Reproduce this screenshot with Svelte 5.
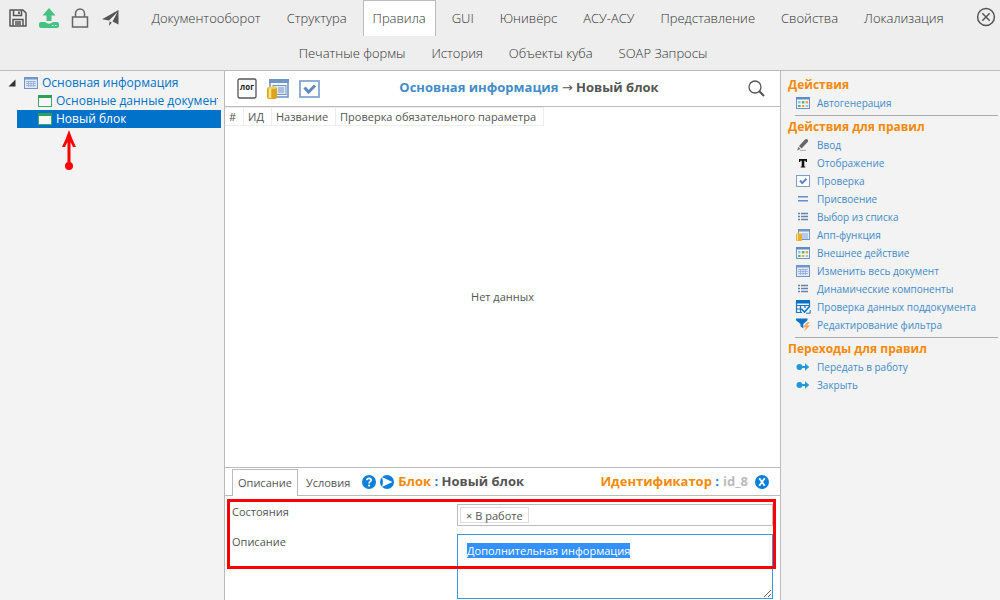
<script>
  import { onMount } from 'svelte';

  const mainTabs = [
    'Документооборот', 'Структура', 'Правила', 'GUI', 'Юнивёрс',
    'АСУ-АСУ', 'Представление', 'Свойства', 'Локализация'
  ];
  const extraTabs = ['Печатные формы', 'История', 'Объекты куба', 'SOAP Запросы'];
  const columns = ['#', 'ИД', 'Название', 'Проверка обязательного параметра'];

  const groups = [
    { title: 'Действия', items: [['grid', 'Автогенерация']] },
    {
      title: 'Действия для правил',
      items: [
        ['pencil', 'Ввод'],
        ['text', 'Отображение'],
        ['check', 'Проверка'],
        ['assign', 'Присвоение'],
        ['list', 'Выбор из списка'],
        ['app', 'Апп-функция'],
        ['grid', 'Внешнее действие'],
        ['table', 'Изменить весь документ'],
        ['list', 'Динамические компоненты'],
        ['subdoc', 'Проверка данных поддокумента'],
        ['filter', 'Редактирование фильтра']
      ]
    },
    {
      title: 'Переходы для правил',
      items: [['move', 'Передать в работу'], ['move', 'Закрыть']]
    }
  ];

  let activeTab = $state('Правила');
  let activePane = $state('Описание');
  let description = $state('Дополнительная информация');
  let field;

  onMount(() => {
    field.focus();
    field.select();
  });
</script>

{#snippet icon(name)}
  {#if name === 'grid'}
    <svg class="icon" viewBox="0 0 14 12" aria-hidden="true">
      <rect x="0.5" y="0.5" width="13" height="11" fill="#f4f8fd" stroke="#6b93cf" />
      <path d="M0 0h14v2.5H0z" fill="#5f8bcb" />
      <path d="M2 4h2.6v2.6H2zM9.6 8h2.6v2H9.6z" fill="#9cc3ea" />
      <path d="M5.8 4h2.6v2.6H5.8zM2 8h2.6v2H2z" fill="#57b868" />
      <path d="M9.6 4h2.6v2.6H9.6zM5.8 8h2.6v2H5.8z" fill="#efa83a" />
    </svg>
  {:else if name === 'pencil'}
    <svg class="icon" viewBox="0 0 14 12" aria-hidden="true">
      <path d="M3 7 8.8.8q1.8-1.6 3 0 .8 1.2-.4 2.4L5.6 9.6z" fill="#666" />
      <path d="M2.5 7.8 4.6 9.9 1 11.4z" fill="#777" />
      <path d="M4 11.4h6" stroke="#aaa" />
    </svg>
  {:else if name === 'text'}
    <svg class="icon" viewBox="0 0 14 12" aria-hidden="true">
      <path d="M3 2h8v3H9.8L9.5 3.8H8.3v5.5l1 .4v.8H4.7v-.8l1-.4V3.8H4.5L4.2 5H3z" fill="#111" />
    </svg>
  {:else if name === 'check'}
    <svg class="icon" viewBox="0 0 14 12" aria-hidden="true">
      <rect x="0.5" y="0.5" width="13" height="11" fill="#fff" stroke="#7c9dcc" />
      <path d="M4 5.5 6.3 8 10.5 3.8" fill="none" stroke="#5f88c0" stroke-width="2" />
    </svg>
  {:else if name === 'assign'}
    <svg class="icon" viewBox="0 0 14 12" aria-hidden="true">
      <path d="M2 4h10M2 8h10" stroke="#6b8fc4" stroke-width="2" />
      <path d="M2 4.5h10M2 8.5h10" stroke="#a9bfdf" />
    </svg>
  {:else if name === 'list'}
    <svg class="icon" viewBox="0 0 14 12" aria-hidden="true">
      <path d="M2 2.5h2M2 5.5h2M2 8.5h2M5 2.5h7M5 5.5h7M5 8.5h7" stroke="#6583b0" stroke-width="1.4" />
    </svg>
  {:else if name === 'app'}
    <svg class="icon" viewBox="0 0 14 12" aria-hidden="true">
      <rect x="2.5" y="0.5" width="11" height="10" fill="#e6eefb" stroke="#7394c6" />
      <path d="M2 0h12v2.5H2z" fill="#7394c6" />
      <path d="M6 5h6M6 7h6M6 9h6" stroke="#87a5d3" />
      <rect x="0" y="4.5" width="6" height="7.5" rx="1" fill="#e5b12e" />
      <path d="M1.5 5v6.5" stroke="#ffe596" />
    </svg>
  {:else if name === 'table'}
    <svg class="icon" viewBox="0 0 14 12" aria-hidden="true">
      <rect x="0.5" y="0.5" width="13" height="11" fill="#dfe9f8" stroke="#7394c6" />
      <path d="M0 0h14v2.5H0z" fill="#7394c6" />
      <path d="M2 4.5h10M2 6.5h10M2 8.5h10M4.5 4v6M7 4v6M9.5 4v6" stroke="#8fabd8" stroke-width="0.8" />
    </svg>
  {:else if name === 'subdoc'}
    <svg class="icon wide" viewBox="0 0 16 14" aria-hidden="true">
      <path d="M14.5 7V1.5h-13v11H7M1 5.5h14M1 9h6M5.5 5v8M10 5v3" fill="none" stroke="#1378c8" stroke-width="1.2" />
      <path d="M1 0h14v3.5H1z" fill="#0c72c6" />
      <path d="m6.5 9 3 3 5-5.5" fill="none" stroke="#1378c8" stroke-width="1.6" />
      <path d="M11 13.2h4.2V10" fill="none" stroke="#1378c8" />
    </svg>
  {:else if name === 'filter'}
    <svg class="icon wide" viewBox="0 0 16 14" aria-hidden="true">
      <path d="M1 .5h11.5v1.8L8.3 6v4.5L5.5 8.3V6L1 2.3z" fill="#0c72c6" />
      <path d="M12.5 4 8 9.2h3L9 13.6l6-6h-3L14.8 4z" fill="#f6a35c" />
    </svg>
  {:else if name === 'move'}
    <svg class="icon" viewBox="0 0 14 12" aria-hidden="true">
      <circle cx="3.5" cy="6" r="3" fill="#1f9ad6" />
      <path d="M6 5h3V2.3L13.2 6 9 9.7V7H6z" fill="#1f9ad6" />
    </svg>
  {/if}
{/snippet}

{#snippet blockIcon()}
  <svg class="block-icon" viewBox="0 0 14 12" aria-hidden="true">
    <rect x="0.5" y="0.5" width="13" height="11" fill="#f7f7f7" stroke="#41a967" />
    <path d="M0 0h14v3H0z" fill="#2f9e58" />
  </svg>
{/snippet}

<div class="shell">
  <header>
    <div class="top-row">
      <div class="tools">
        <button type="button" aria-label="Сохранить">
          <svg width="18" height="18" viewBox="0 0 18 18" fill="none" stroke="#555" stroke-width="1.5">
            <path d="M1 1h13l3 3v13H1z" stroke-linejoin="round" />
            <path d="M4.5 1v5.5h8V1M4 17v-6.5h10V17M6 13h6M6 15h6" />
            <path d="M10 2.5V5" stroke-width="1.8" />
          </svg>
        </button>
        <button type="button" aria-label="Загрузить">
          <svg width="20" height="20" viewBox="0 0 20 20" fill="#45c183">
            <path d="M10 0l6.5 7.5h-4V13h-5V7.5h-4z" />
            <path d="M2 14h4q4 3.6 8 0h4a2 2 0 0 1 2 2v2a2 2 0 0 1-2 2H2a2 2 0 0 1-2-2v-2a2 2 0 0 1 2-2z" />
            <path d="M13 17.5h1.5M16 17.5h1.5" stroke="#eee" />
          </svg>
        </button>
        <button type="button" aria-label="Заблокировать">
          <svg width="18" height="20" viewBox="0 0 18 20" fill="none" stroke="#666" stroke-width="1.5">
            <rect x="1.5" y="9" width="15" height="10" />
            <path d="M4.5 9V5.5a4.5 4.5 0 0 1 9 0V9" />
          </svg>
        </button>
        <button type="button" aria-label="Отправить">
          <svg width="18" height="18" viewBox="0 0 18 18" fill="#555">
            <path d="M17.5 1v14.5l-6-3L16.5 3 8 11.5 1 10.3z" />
            <path d="M8.5 12.5l2.3 1.1L8 17z" />
          </svg>
        </button>
      </div>
      <nav aria-label="Разделы">
        {#each mainTabs as tab}
          <button type="button" class:active={activeTab === tab} onclick={() => (activeTab = tab)}>{tab}</button>
        {/each}
      </nav>
      <button type="button" class="close" aria-label="Закрыть">
        <svg width="20" height="20" viewBox="0 0 20 20" fill="none" stroke="#555" stroke-width="1.5">
          <circle cx="10" cy="10" r="8.4" />
          <path d="M6.3 6.3l7.4 7.4M13.7 6.3l-7.4 7.4" />
        </svg>
      </button>
    </div>
    <nav class="second" aria-label="Дополнительно">
      {#each extraTabs as tab}
        <button type="button" class:active={activeTab === tab} onclick={() => (activeTab = tab)}>{tab}</button>
      {/each}
    </nav>
  </header>

  <div class="columns">
    <aside class="tree">
      <a class="root" href="#main">
        <svg class="twisty" viewBox="0 0 8 8" aria-hidden="true"><path d="M7.5.5v7h-7z" fill="#333" /></svg>
        {@render icon('table')}
        <span>Основная информация</span>
      </a>
      <a class="leaf" href="#data">{@render blockIcon()}<span>Основные данные документа</span></a>
      <a class="leaf selected" href="#block">{@render blockIcon()}<span>Новый блок</span></a>
      <svg class="pointer" viewBox="0 0 14 40" aria-hidden="true">
        <path d="M7 0Q10 9 14 17H11L8.5 12V33h-3V12L3 17H0Q4 9 7 0z" fill="#f00" />
        <circle cx="7" cy="36" r="4" fill="#f00" />
      </svg>
    </aside>

    <main>
      <div class="bar">
        <button type="button" aria-label="Лог">
          <svg width="20" height="21" viewBox="0 0 20 21">
            <rect x="1" y="1" width="18" height="19" rx="1.5" fill="#fff" stroke="#555" stroke-width="1.3" />
            <text x="10" y="12" text-anchor="middle" class="log">лог</text>
          </svg>
        </button>
        <button type="button" aria-label="Апп-функция">
          <svg width="22" height="20" viewBox="0 0 22 20">
            <rect x="3" y="1" width="18" height="17" fill="#f3f7fd" stroke="#7394c6" stroke-width="1.6" />
            <path d="M2 0h20v4H2z" fill="#7394c6" />
            <rect x="6" y="6.5" width="13" height="9" fill="#dfe9f8" stroke="#7394c6" />
            <path d="M11 9h6M11 11h6M11 13h6" stroke="#7394c6" />
            <rect x="0" y="8" width="10" height="12" rx="2" fill="#dda41c" />
            <path d="M3 9v10" stroke="#ffe88a" stroke-width="2.5" />
            <ellipse cx="5" cy="8.7" rx="4.5" ry="1.2" fill="#f4cf60" />
          </svg>
        </button>
        <button type="button" aria-label="Проверка">
          <svg width="21" height="18" viewBox="0 0 21 18">
            <rect x="1" y="1" width="19" height="16" fill="#fff" stroke="#86a6d2" stroke-width="1.8" />
            <path d="M5.5 7.5 9.5 12 16 5.5" fill="none" stroke="#6288c0" stroke-width="3" />
          </svg>
        </button>
        <h1><a href="#main">Основная информация</a> <span class="arrow">→</span> Новый блок</h1>
        <button type="button" aria-label="Поиск">
          <svg width="17" height="17" viewBox="0 0 17 17" fill="none" stroke="#555">
            <circle cx="7" cy="7" r="6" stroke-width="1.3" />
            <path d="M11.3 11.3 16 16" stroke-width="2.2" />
          </svg>
        </button>
      </div>

      <table>
        <thead>
          <tr>{#each columns as column}<th>{column}</th>{/each}</tr>
        </thead>
      </table>
      <p class="empty">Нет данных</p>

      <section class="details">
        <div class="panes">
          <div class="pane-list">
            {#each ['Описание', 'Условия'] as pane}
              <button type="button" class:active={activePane === pane} onclick={() => (activePane = pane)}>{pane}</button>
            {/each}
          </div>
          <button type="button" aria-label="Справка">
            <svg width="14" height="14" viewBox="0 0 14 14">
              <circle cx="7" cy="7" r="7" fill="#0a7fdc" />
              <path d="M4.8 5.2Q4.9 3.3 7 3.3t2.2 1.8Q9.2 6 8 6.8 7.1 7.3 7.1 8.4" fill="none" stroke="#fff" stroke-width="1.7" />
              <circle cx="7.1" cy="10.6" r="1.1" fill="#fff" />
            </svg>
          </button>
          <button type="button" aria-label="Запустить">
            <svg width="14" height="14" viewBox="0 0 14 14">
              <circle cx="7" cy="7" r="7" fill="#0a7fdc" />
              <path d="M1.8 2 12.5 7 1.8 12Q4 7 1.8 2z" fill="#fff" />
            </svg>
          </button>
          <h2><span class="key">Блок</span> <span class="colon">:</span> Новый блок</h2>
          <p class="ident"><span class="key">Идентификатор</span> <span class="colon">:</span></p>
          <span class="id">id_8</span>
          <button type="button" aria-label="Закрыть блок">
            <svg width="14" height="14" viewBox="0 0 14 14">
              <circle cx="7" cy="7" r="7" fill="#0a7fdc" />
              <path d="M4.3 3.3l5.4 7.4M9.7 3.3 4.3 10.7" stroke="#fff" stroke-width="1.8" />
            </svg>
          </button>
        </div>
        <form>
          <label for="states">Состояния</label>
          <div class="tags">
            <span class="tag"><button type="button" aria-label="Убрать">×</button>В работе</span>
            <input id="states" type="text" />
          </div>
          <label for="description">Описание</label>
          <textarea id="description" spellcheck="false" bind:this={field} bind:value={description}></textarea>
        </form>
        <div class="frame"></div>
      </section>
    </main>

    <aside class="actions">
      {#each groups as group}
        <section>
          <h3>{group.title}</h3>
          <ul>
            {#each group.items as [name, label]}
              <li><a href="#action">{@render icon(name)}<span>{label}</span></a></li>
            {/each}
          </ul>
        </section>
      {/each}
    </aside>
  </div>
</div>

<style>
  :global(body) {
    margin: 0;
    font-family: 'Open Sans', sans-serif;
    color: #555;
  }

  .shell {
    display: flex;
    flex-direction: column;
    height: 100vh;
    overflow: hidden;
    font-size: 11px;
    line-height: 18px;
  }

  button {
    padding: 0;
    border: 0;
    background: none;
    color: inherit;
    font: inherit;
    cursor: pointer;
  }

  svg {
    display: block;
    flex-shrink: 0;
  }

  a {
    color: #428bca;
    text-decoration: none;
  }

  h1,
  h2,
  h3,
  p,
  ul {
    margin: 0;
    padding: 0;
    list-style: none;
  }

  header {
    background: #eee;
    border-bottom: 1px solid #bbb;
  }

  .top-row {
    display: flex;
    align-items: flex-start;
    height: 36px;
  }

  .tools {
    display: flex;
    gap: 12px;
    align-items: center;
    padding: 8px 0 0 9px;
  }

  nav {
    display: flex;
    flex: 1;
    justify-content: center;
    gap: 6px;
    color: #333;
    font-size: 13px;
    font-weight: 300;
  }

  nav button {
    height: 36px;
    padding: 0 9px 2px;
    border: 1px solid transparent;
    border-bottom: 0;
    white-space: nowrap;
  }

  nav button.active {
    background: #fff;
    border-color: #bbb;
  }

  nav.second {
    height: 34px;
    padding-left: 6px;
  }

  nav.second button {
    height: 34px;
  }

  .close {
    padding: 7px 4px 0 0;
  }

  .columns {
    display: grid;
    grid-template-columns: 225px 1fr 220px;
    flex: 1;
    min-height: 0;
  }

  .tree {
    position: relative;
    box-sizing: border-box;
    padding: 3px 3px 0 0;
    background: #f3f3f3;
    border-right: 1px solid #bbb;
    font-size: 12px;
  }

  .tree a {
    display: flex;
    align-items: center;
    color: #0072c9;
    white-space: nowrap;
  }

  .root {
    gap: 4px;
    padding-left: 8px;
  }

  .twisty {
    width: 8px;
    height: 8px;
    margin-right: 4px;
  }

  .leaf {
    gap: 4px;
    margin-left: 17px;
    padding: 0 3px 0 21px;
  }

  .leaf span {
    overflow: hidden;
  }

  .tree .selected {
    background: #0072c9;
    color: #fff;
  }

  .icon,
  .block-icon {
    width: 14px;
    height: 12px;
  }

  .icon.wide {
    width: 16px;
    height: 14px;
    margin: 0 -1px;
  }

  .pointer {
    position: absolute;
    top: 59px;
    left: 62px;
    width: 14px;
    height: 40px;
  }

  main {
    display: flex;
    flex-direction: column;
    min-width: 0;
    background: #fff;
  }

  .bar {
    display: flex;
    align-items: center;
    gap: 10px;
    height: 35px;
    padding: 0 15px 0 12px;
    border-bottom: 1px solid #bbb;
  }

  .log {
    font: bold 8px 'Open Sans', sans-serif;
    fill: #222;
  }

  h1,
  h2,
  .ident,
  .id {
    font-size: 13px;
    font-weight: 700;
    white-space: nowrap;
  }

  h1 {
    flex: 1;
    padding: 0 10px 2px 0;
    text-align: center;
  }

  .arrow {
    font-family: 'DejaVu Sans', sans-serif;
    font-weight: 400;
  }

  table {
    align-self: flex-start;
    border-collapse: collapse;
    line-height: 17px;
  }

  th {
    padding: 0 7px 0 4px;
    border: solid #eee;
    border-width: 1px 1px 1px 0;
    font-weight: 400;
  }

  .empty {
    flex: 1;
    display: flex;
    align-items: center;
    justify-content: center;
  }

  .details {
    position: relative;
    border-top: 1px solid #bbb;
  }

  .panes {
    display: flex;
    align-items: center;
    gap: 4px;
    height: 27px;
    padding: 0 11px 0 7px;
    border-bottom: 1px solid #bbb;
  }

  .pane-list {
    display: flex;
    align-self: flex-end;
    gap: 2px;
    margin: 0 2px -1px 0;
  }

  .pane-list button {
    height: 27px;
    padding: 0 5px 1px;
    border: 1px solid transparent;
    border-bottom: 0;
  }

  .pane-list .active {
    background: #fff;
    border-color: #bbb;
  }

  h2,
  .ident,
  .id {
    padding-bottom: 2px;
  }

  .ident {
    margin-left: auto;
  }

  .id {
    margin-right: 3px;
    color: #bbb;
  }

  .key {
    color: #f58a07;
  }

  .colon {
    color: #0a7fdc;
  }

  form {
    display: grid;
    grid-template-columns: 225px 1fr;
    row-gap: 8px;
    padding: 8px 7px 1px;
  }

  form label {
    line-height: 15px;
  }

  .tags {
    display: flex;
    box-sizing: border-box;
    height: 22px;
    padding: 2px;
    border: 1px solid #bbb;
  }

  .tag {
    display: flex;
    align-items: center;
    gap: 3px;
    padding: 1px 5px 0;
    border: 1px solid #ddd;
    line-height: 14px;
    white-space: nowrap;
  }

  .tags input {
    flex: 1;
    min-width: 0;
    border: 0;
    outline: 0;
    font: inherit;
  }

  textarea {
    box-sizing: border-box;
    width: 100%;
    height: 65px;
    padding: 8px 9px;
    border: 1px solid #3399e8;
    border-radius: 0;
    outline: 0;
    color: inherit;
    font: 11px/15px 'Open Sans', sans-serif;
    resize: vertical;
  }

  textarea::selection {
    background: #3390ff;
    color: #fff;
  }

  /* highlight over the two form rows */
  .frame {
    position: absolute;
    inset: 31px 4px 31px 2px;
    border: 3px solid #f00;
    pointer-events: none;
  }

  .actions {
    padding: 5px 2px 0 7px;
    background: #f3f3f3;
    border-left: 1px solid #bbb;
    font-size: 10px;
  }

  .actions section + section::before {
    content: '';
    display: block;
    height: 1px;
    margin: 3px 0 2px 7px;
    background: #aaa;
  }

  h3 {
    color: #f58a07;
    font-size: 12px;
    font-weight: 700;
  }

  .actions a {
    display: flex;
    align-items: center;
    gap: 7px;
    padding-left: 8px;
    white-space: nowrap;
  }
</style>
